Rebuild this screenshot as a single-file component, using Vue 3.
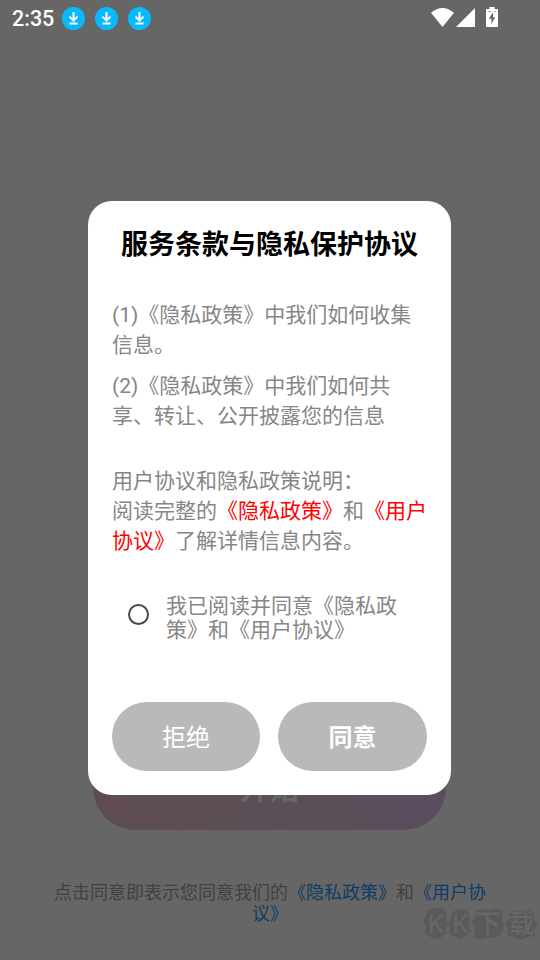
<script setup>
const notifications = [1, 2, 3]
</script>

<template>
  <div class="screen">
    <header class="status">
      <span class="clock">2:35</span>
      <svg v-for="n in notifications" :key="n" class="note" viewBox="0 0 23 23">
        <circle cx="11.5" cy="11.5" r="11.5" fill="#08b9fd" />
        <path d="M11.5 5v8.4M7.5 9.6l4 4 4-4M7.5 16.5h8" fill="none" stroke="#fff" stroke-width="2" />
      </svg>
      <span class="spacer"></span>
      <svg class="wifi" viewBox="0 0 23 19"><path d="M0 4.8Q11.5-4.8 23 4.8L11.5 19Z" fill="#fff" /></svg>
      <svg class="signal" viewBox="0 0 19 19"><path d="M19 0v19H0Z" fill="#fff" /></svg>
      <svg class="battery" viewBox="0 0 12 20">
        <path d="M3.5 0h5v2H11a1 1 0 0 1 1 1v16a1 1 0 0 1-1 1H1a1 1 0 0 1-1-1V3a1 1 0 0 1 1-1h2.5Z" fill="#fff" />
        <path d="M7 5.2 2.8 11.8H5.4V17L9.2 10.2H7Z" fill="#666" />
        <path d="M2 4.6h3M8.5 4.6H10" stroke="#888" stroke-width=".8" />
      </svg>
    </header>

    <main class="page">
      <button class="start">开始</button>
      <p class="consent">点击同意即表示您同意我们的<a>《隐私政策》</a>和<a>《用户协议》</a></p>
    </main>

    <div class="watermark">
      <svg class="blobs" viewBox="0 0 116 34">
        <g fill="#5a5a5a">
          <path d="M5 3 10 1 15 2 20 1 24 6 23 11 25 17 22 22 23 27 17 31 11 32 6 29 2 26 3 20 0 15 3 9Z" />
          <path d="M31 4 36 2 42 3 46 6 47 12 45 18 48 24 43 29 38 32 31 29 26 27 27 21 24 16 28 11Z" />
          <path d="M53 4 60 2 67 3 74 1 80 5 79 13 81 20 77 29 70 31 63 31 57 33 50 30 52 22 49 15 52 10Z" />
          <path d="M87 5 94 3 101 4 107 2 111 7 110 12 115 17 111 23 112 29 105 30 99 33 91 30 85 29 84 22 82 17 86 12Z" />
        </g>
      </svg>
      <span class="mark"><span>K</span><span>K</span><b>下</b><b>载</b></span>
    </div>

    <section class="dialog">
      <h1>服务条款与隐私保护协议</h1>
      <p class="item first">(1)《隐私政策》中我们如何收集信息。</p>
      <p class="item second">(2)《隐私政策》中我们如何共享、转让、公开披露您的信息</p>
      <p class="item notes">用户协议和隐私政策说明：<br />阅读完整的<em>《隐私政策》</em>和<em>《用户协议》</em>了解详情信息内容。</p>
      <label class="agree">
        <span class="radio"></span>
        <span class="label">我已阅读并同意《隐私政策》和《用户协议》</span>
      </label>
      <div class="actions">
        <button>拒绝</button>
        <button class="strong">同意</button>
      </div>
    </section>
  </div>
</template>

<style>
body {
  background: #666;
}
</style>

<style scoped>
.screen {
  position: relative;
  width: 540px;
  height: 960px;
  overflow: hidden;
  display: flex;
  flex-direction: column;
  background: #666;
  font-family: Roboto, "Noto Sans CJK SC", sans-serif;
  text-spacing-trim: space-all;
}
p, h1 { margin: 0; }
button {
  border: 0;
  padding: 0;
  font-family: inherit;
}
.status {
  display: flex;
  align-items: center;
  height: 37px;
  padding: 0 42px 0 12px;
  box-sizing: border-box;
}
.clock {
  width: 50px;
  color: #fff;
  font-size: 21.5px;
  font-weight: 500;
  line-height: 37px;
}
.note { width: 23px; height: 23px; margin-right: 10px; }
.spacer { flex: 1; }
.wifi { width: 23px; height: 19px; margin-right: 2px; margin-top: -2px; }
.signal { width: 19px; height: 19px; margin-right: 11px; margin-top: -2px; }
.battery { width: 12px; height: 20px; margin-top: -3px; }
.page {
  flex: 1;
  display: flex;
  flex-direction: column;
  align-items: center;
  padding-top: 709px;
}
.start {
  width: 353px;
  height: 84px;
  flex: none;
  margin-right: 1px;
  padding-top: 2px;
  border-radius: 42px;
  background: linear-gradient(100deg, #604c50 0%, #5c4e53 28%, #5a4e59 72%, #584d60 100%);
  color: #666;
  font-size: 30px;
  font-weight: 700;
  line-height: 82px;
}
.consent {
  width: 440px;
  margin-top: 52px;
  color: #414141;
  font-size: 18px;
  line-height: 21px;
  text-align: center;
}
.consent a { color: #0c3d66; }
.watermark {
  position: absolute;
  left: 423px;
  top: 907px;
  width: 116px;
  height: 34px;
}
.blobs { display: block; width: 116px; height: 34px; }
.mark {
  position: absolute;
  inset: 0;
  display: grid;
  grid-template-columns: 26px 23px 32px 35px;
  align-items: center;
  justify-items: center;
  color: #676767;
  font-size: 26px;
  line-height: 32px;
}
.mark b { font-size: 26px; font-weight: 500; }
.dialog {
  position: absolute;
  left: 88px;
  top: 201px;
  width: 363px;
  height: 594px;
  box-sizing: border-box;
  padding: 24px 24px 24px;
  border-radius: 24px;
  background: #fff;
  display: flex;
  flex-direction: column;
}
h1 {
  color: #000;
  font-size: 27px;
  font-weight: 700;
  line-height: 40px;
  text-align: center;
}
.item {
  color: #868686;
  font-size: 21px;
  line-height: 30px;
}
.first { margin-top: 35px; }
.second { margin-top: 11px; }
.notes { margin-top: 35px; }
em { font-style: normal; color: #f00; }
.agree {
  display: flex;
  align-items: flex-start;
  margin-top: 38px;
  padding-left: 16px;
}
.radio {
  flex: none;
  width: 21px;
  height: 21px;
  box-sizing: border-box;
  border: 2px solid #484848;
  border-radius: 50%;
  margin: 10px 17px 0 0;
}
.label {
  color: #868686;
  font-size: 21px;
  line-height: 24px;
}
.actions {
  display: grid;
  grid-template-columns: 148px 149px;
  gap: 18px;
  margin-top: auto;
}
.actions button {
  height: 69px;
  padding-top: 3px;
  border-radius: 35px;
  background: #b9b9b9;
  color: #fff;
  font-size: 24px;
  line-height: 66px;
}
.actions .strong { font-weight: 700; }
</style>
